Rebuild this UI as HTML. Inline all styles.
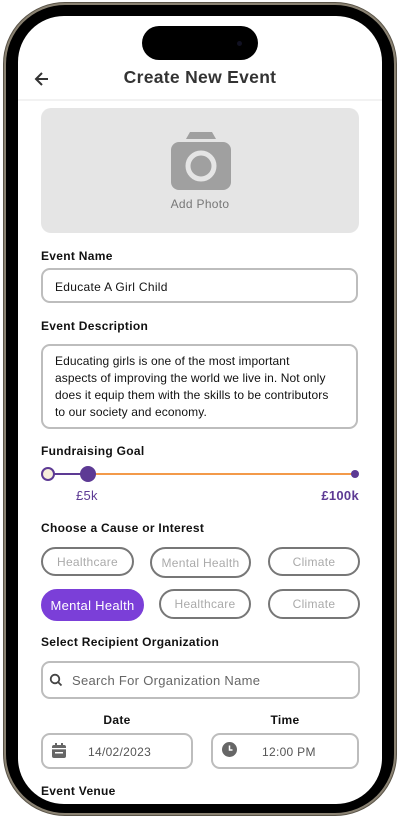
<!DOCTYPE html>
<html><head><meta charset="utf-8"><style>
*{box-sizing:border-box;margin:0;padding:0}
body{width:400px;height:818px;background:#fff;position:relative;overflow:hidden;font-family:"Liberation Sans",sans-serif;color:#222;letter-spacing:0.3px}
.bezel{position:absolute;left:3px;top:2px;width:394px;height:814px;border-radius:62px;background:#8a8272;border:1px solid #5a5448}
.frame{position:absolute;left:6px;top:5px;width:388px;height:808px;border-radius:59px;background:#000}
.screen{position:absolute;left:18px;top:16px;width:364px;height:788px;border-radius:46px;background:#fff;overflow:hidden}
.a{position:absolute}
.lbl{position:absolute;left:23px;font-size:12px;font-weight:bold;color:#111}
.box{position:absolute;border:2px solid #bdbdbd;border-radius:9px;background:#fff}
.chip{position:absolute;border:2px solid #777;border-radius:16px;font-size:12px;color:#aaa;text-align:center;display:flex;align-items:center;justify-content:center}
</style></head><body>
<div class="bezel"></div>
<div class="frame"></div>
<div class="screen">
  <div class="a" style="left:124px;top:10px;width:116px;height:34px;border-radius:17px;background:#000"></div>
  <div class="a" style="left:219px;top:25px;width:5px;height:5px;border-radius:50%;background:#112"></div>
  <svg class="a" style="left:16px;top:55px" width="16" height="16" viewBox="0 0 16 16"><path d="M14 8H2M8 2L2 8l6 6" stroke="#333" stroke-width="2" fill="none"/></svg>
  <div class="a" style="left:0;width:364px;top:51px;text-align:center;font-size:17.5px;font-weight:bold;color:#333">Create New Event</div>
  <div class="a" style="left:0;top:83px;width:364px;height:2px;background:#f2f2f2"></div>
  <div class="a" style="left:23px;top:92px;width:318px;height:125px;border-radius:10px;background:#e5e5e5"></div>
  <svg class="a" style="left:153px;top:115px" width="60" height="60" viewBox="0 0 60 60"><path d="M19 1h22l4 7H15z" fill="#a0a0a0"/><rect x="0" y="11" width="60" height="48" rx="8" fill="#a0a0a0"/><circle cx="30" cy="35" r="13" fill="none" stroke="#e5e5e5" stroke-width="5"/></svg>
  <div class="a" style="left:0;width:364px;top:181px;text-align:center;font-size:12px;color:#777">Add Photo</div>

  <div class="lbl" style="top:233px">Event Name</div>
  <div class="box" style="left:23px;top:252px;width:317px;height:35px;font-size:12px;padding:10px 12px;color:#111">Educate A Girl Child</div>

  <div class="lbl" style="top:303px">Event Description</div>
  <div class="box" style="left:23px;top:328px;width:317px;height:85px;font-size:12px;line-height:17px;padding:7px 12px;color:#111;white-space:nowrap;letter-spacing:0.1px">Educating girls is one of the most important<br>aspects of improving the world we live in. Not only<br>does it equip them with the skills to be contributors<br>to our society and economy.</div>

  <div class="lbl" style="top:428px">Fundraising Goal</div>
  <div class="a" style="left:30px;top:457px;width:40px;height:2px;background:#5d3a94"></div>
  <div class="a" style="left:70px;top:457px;width:268px;height:2px;background:#f39a4a"></div>
  <div class="a" style="left:23px;top:451px;width:14px;height:14px;border-radius:50%;background:#f7eedb;border:2px solid #5d3a94"></div>
  <div class="a" style="left:62px;top:450px;width:16px;height:16px;border-radius:50%;background:#5d3a94"></div>
  <div class="a" style="left:333px;top:454px;width:8px;height:8px;border-radius:50%;background:#5d3a94"></div>
  <div class="a" style="left:58px;top:472px;font-size:13px;color:#5d3a94">£5k</div>
  <div class="a" style="right:23px;top:472px;font-size:13px;font-weight:bold;color:#5d3a94">£100k</div>

  <div class="lbl" style="top:505px">Choose a Cause or Interest</div>
  <div class="chip" style="left:23px;top:531px;width:93px;height:29px">Healthcare</div>
  <div class="chip" style="left:132px;top:531px;width:101px;height:31px">Mental Health</div>
  <div class="chip" style="left:250px;top:531px;width:92px;height:29px">Climate</div>
  <div class="chip" style="left:23px;top:573px;width:103px;height:32px;background:#7b3fd8;border-color:#7b3fd8;color:#fff;font-size:13px">Mental Health</div>
  <div class="chip" style="left:141px;top:573px;width:92px;height:30px">Healthcare</div>
  <div class="chip" style="left:250px;top:573px;width:92px;height:30px">Climate</div>

  <div class="lbl" style="top:619px">Select Recipient Organization</div>
  <div class="box" style="left:23px;top:645px;width:319px;height:38px;font-size:13px;padding:10px 0 0 29px;color:#666">Search For Organization Name</div>
  <svg class="a" style="left:31px;top:657px" width="14" height="14" viewBox="0 0 14 14"><circle cx="6" cy="6" r="4.3" stroke="#444" stroke-width="1.8" fill="none"/><path d="M9 9l3.5 3.5" stroke="#444" stroke-width="1.8"/></svg>

  <div class="a" style="left:23px;width:152px;top:697px;text-align:center;font-size:12px;font-weight:bold;color:#111">Date</div>
  <div class="a" style="left:193px;width:148px;top:697px;text-align:center;font-size:12px;font-weight:bold;color:#111">Time</div>
  <div class="box" style="left:23px;top:717px;width:152px;height:36px;font-size:12px;padding:10px 0 0 45px;color:#555">14/02/2023</div>
  <svg class="a" style="left:34px;top:727px" width="14" height="15" viewBox="0 0 14 15"><rect x="3" y="0" width="2" height="3" fill="#666"/><rect x="9" y="0" width="2" height="3" fill="#666"/><rect x="0" y="2" width="14" height="13" rx="2" fill="#666"/><rect x="0" y="5" width="14" height="1.3" fill="#fff"/><rect x="3" y="9" width="8" height="1.5" fill="#fff"/></svg>
  <div class="box" style="left:193px;top:717px;width:148px;height:36px;font-size:12px;padding:10px 0 0 49px;color:#555">12:00 PM</div>
  <svg class="a" style="left:204px;top:726px" width="15" height="15" viewBox="0 0 15 15"><circle cx="7.5" cy="7.5" r="7.5" fill="#666"/><path d="M7.5 3.5v4.5h3" stroke="#fff" stroke-width="1.5" fill="none"/></svg>

  <div class="lbl" style="top:768px">Event Venue</div>
</div>
</body></html>
